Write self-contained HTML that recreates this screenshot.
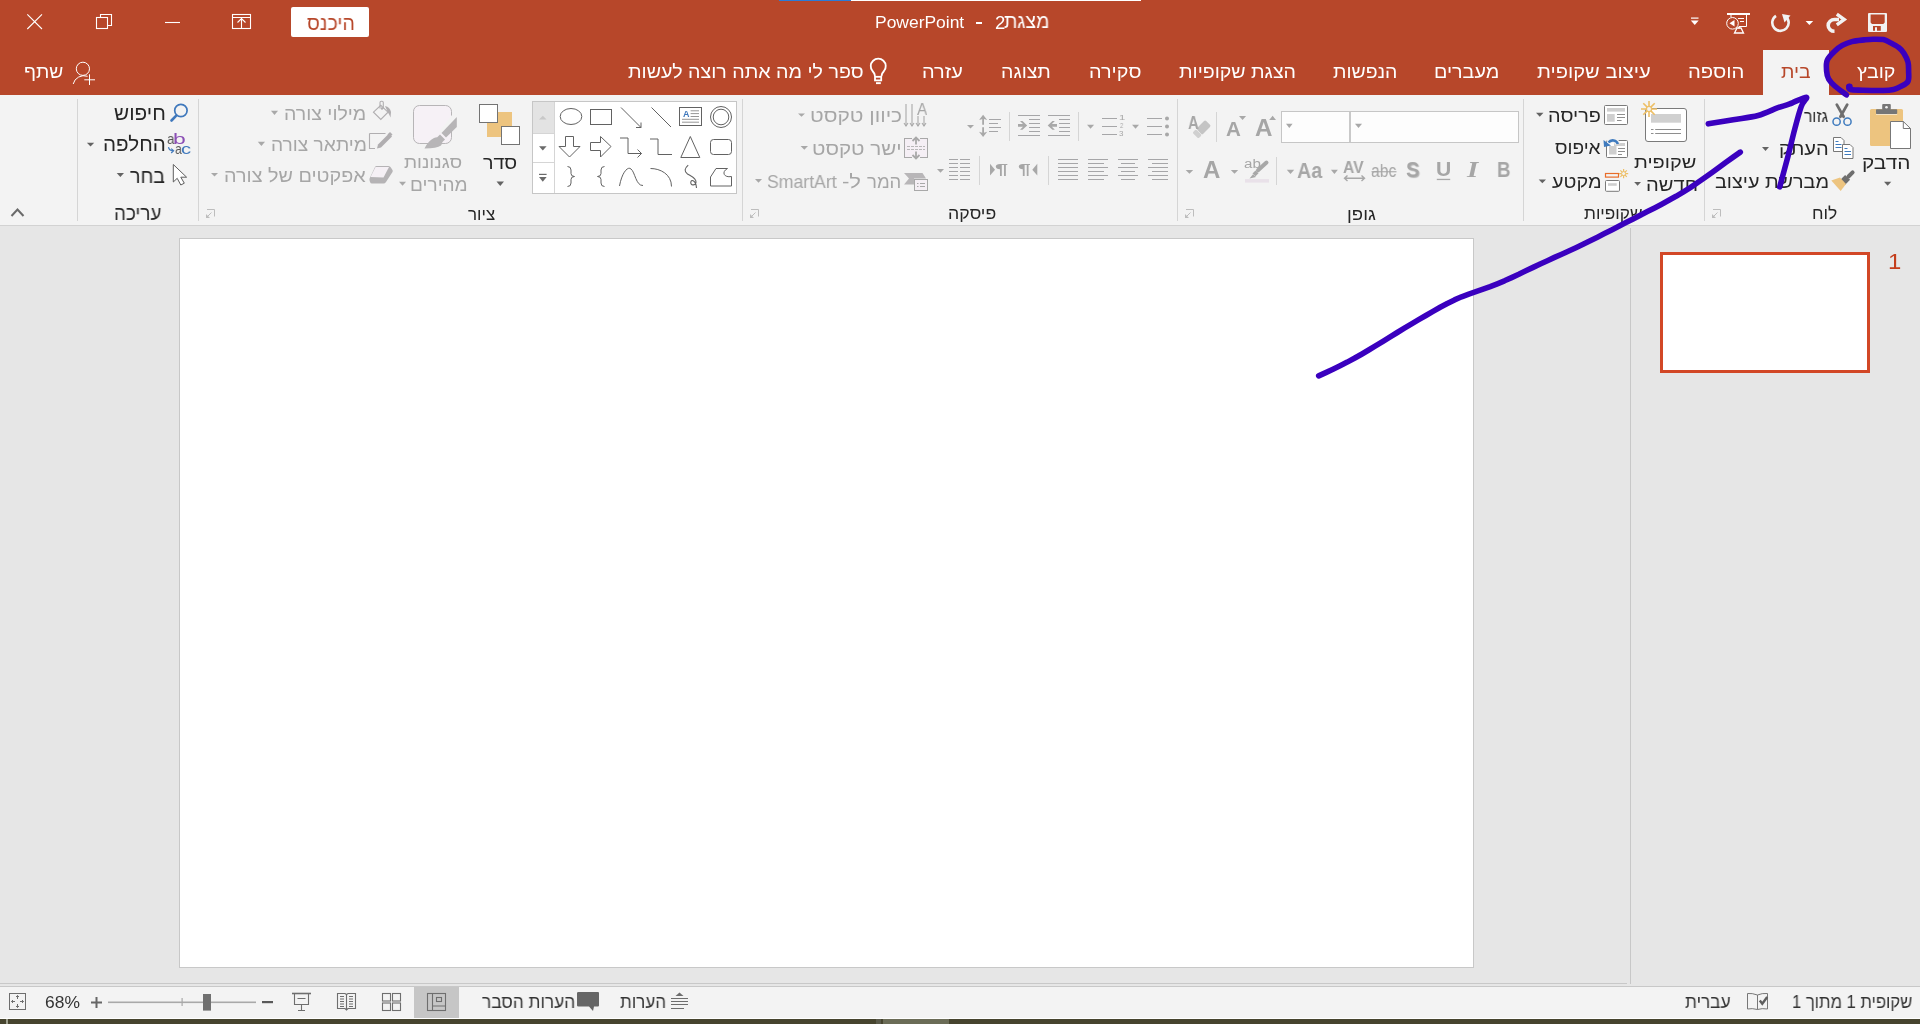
<!DOCTYPE html><html><head><meta charset="utf-8"><style>
*{margin:0;padding:0;box-sizing:border-box}
html,body{width:1920px;height:1024px;overflow:hidden}
body{position:relative;background:#E6E6E6;font-family:"Liberation Sans",sans-serif}
.a{position:absolute}
.t{position:absolute;will-change:transform;white-space:nowrap;line-height:1;transform-origin:0 0;direction:rtl;unicode-bidi:isolate;font-family:"Liberation Sans",sans-serif}
svg{position:absolute;overflow:visible}
</style></head><body>
<div class='a' style='left:0px;top:0px;width:1920px;height:95px;background:#B7472A'></div>
<div class='a' style='left:779px;top:0px;width:72px;height:1px;background:#2B7BD6'></div>
<div class='a' style='left:851px;top:0px;width:290px;height:1px;background:#fff'></div>
<div class='a' style='left:0px;top:95px;width:1920px;height:130px;background:#F3F3F3'></div>
<div class='a' style='left:0px;top:225px;width:1920px;height:1px;background:#D2D2D2'></div>
<div class='a' style='left:1763px;top:50px;width:66px;height:45px;background:#F3F3F3'></div>
<div class='a' style='left:179px;top:238px;width:1295px;height:730px;background:#fff;border:1px solid #C8C8C8'></div>
<div class='a' style='left:1630px;top:228px;width:1px;height:756px;background:#C8C8C8'></div>
<div class='a' style='left:0px;top:983px;width:1627px;height:1px;background:#C8C8C8'></div>
<div class='a' style='left:0px;top:986px;width:1920px;height:1px;background:#C8C8C8'></div>
<div class='a' style='left:0px;top:987px;width:1920px;height:31px;background:#F3F3F3'></div>
<div class='a' style='left:0px;top:1018px;width:1920px;height:1px;background:#FFFFFF'></div>
<div class='a' style='left:0px;top:1019px;width:1920px;height:5px;background:#46442E'></div>
<div class='a' style='left:6px;top:1019px;width:2px;height:5px;background:#9E9F8E'></div>
<div class='a' style='left:876px;top:1019px;width:5px;height:5px;background:#5A5A4A'></div>
<div class='a' style='left:883px;top:1019px;width:66px;height:5px;background:#6B6C57'></div>
<div class='a' style='left:1660px;top:252px;width:210px;height:121px;background:#fff;border:3px solid #D24726'></div>
<div class='a' style='left:291px;top:7px;width:78px;height:30px;background:#fff;border-radius:2px'></div>
<svg width="1920" height="1024" style="left:0;top:0" shape-rendering="geometricPrecision">
<!-- ===== title bar ===== -->
<g stroke="#fff" stroke-width="1.1" fill="none">
  <path d="M27.3 14.3 L42 29 M42 14.3 L27.3 29"/>
  <rect x="96.5" y="17.5" width="11" height="11"/>
  <path d="M100.5 17.5 V14.5 H111.5 V25.5 H107.5"/>
  <path d="M165 22.5 H180"/>
  <rect x="232.5" y="14.5" width="18" height="14"/>
  <path d="M232.5 17.5 H250.5 M241.5 17.8 V28.5 M237.5 22.5 L241.5 18.5 L245.5 22.5"/>
</g>
<!-- presenter -->
<g fill="none" stroke="#fff">
  <path d="M1727 14 H1750" stroke-width="2"/>
  <path d="M1746.5 15 V26.5 H1739" stroke-width="1"/>
  <path d="M1738 18.5 H1744 M1740 21.5 H1744" stroke-width="1"/>
  <circle cx="1732.5" cy="23.3" r="5.8" stroke-width="1"/>
  <path d="M1731 15 V17" stroke-width="1"/>
</g>
<path d="M1729.5 23.3 L1734.5 20 V26.6 Z" fill="#fff"/>
<path d="M1737 28 H1741 L1743.5 33 H1734.5 Z" fill="none" stroke="#fff" stroke-width="1.3"/><path d="M1739 26.5 V28.5" stroke="#fff" stroke-width="1.5"/>
<!-- customize QAT -->
<g fill="#fff"><rect x="1691" y="17.5" width="7.5" height="1.2"/><path d="M1690.8 20.5 H1698.7 L1694.75 25 Z"/></g>
<!-- repeat -->
<path d="M1776 15.8 A8.2 8.2 0 1 0 1785.5 16.2" fill="none" stroke="#F2F2F2" stroke-width="2.6"/>
<path d="M1782 14 L1790.5 15.6 L1784.5 22.5 Z" fill="#F2F2F2"/>
<path d="M1805.6 21 H1813.2 L1809.4 25 Z" fill="#fff"/>
<!-- redo -->
<path d="M1834.5 31.3 A6.3 5.9 0 0 1 1834.5 19.5 H1839" fill="none" stroke="#F2F2F2" stroke-width="3.6"/>
<path d="M1838.2 15.2 L1844.2 19.5 L1838.2 23.8" fill="none" stroke="#F2F2F2" stroke-width="3.4" stroke-linecap="square" stroke-linejoin="miter"/>
<!-- save -->
<path fill="#F2F2F2" fill-rule="evenodd" d="M1869 13 H1886 Q1887 13 1887 14 V31 Q1887 32 1886 32 H1869 Q1868 32 1868 31 V14 Q1868 13 1869 13 Z M1870.6 14.4 V22.4 L1872 23.9 H1883.3 L1884.7 22.4 V14.4 Z M1873 26 V30.8 H1875 V27.2 H1877 V30.8 H1880.8 V26 Z"/>
<!-- share person -->
<g fill="none" stroke="#fff" stroke-width="1">
  <circle cx="82.9" cy="68.8" r="6.6"/>
  <path d="M73.2 84 A11 10.5 0 0 1 87.6 76.3"/>
  <path d="M84.3 79.8 H95 M89.5 74.3 V85"/>
</g>
<!-- lightbulb -->
<g fill="none" stroke="#fff" stroke-width="1.8">
  <path d="M875 76 Q874.5 73 872.5 71 A7.5 7.5 0 1 1 884 71 Q882 73 881.5 76"/>
  <rect x="875" y="76.8" width="6.2" height="3.6"/>
</g>
<rect x="876" y="82.2" width="4.8" height="1.9" fill="#fff"/>

<!-- ===== ribbon separators ===== -->
<g fill="#D5D5D5">
  <rect x="77" y="99" width="1" height="122"/>
  <rect x="198" y="99" width="1" height="122"/>
  <rect x="742" y="99" width="1" height="122"/>
  <rect x="1177" y="99" width="1" height="122"/>
  <rect x="1523" y="99" width="1" height="122"/>
  <rect x="1704" y="99" width="1" height="122"/>
  <rect x="1216" y="112" width="1" height="30"/>
  <rect x="1276" y="157" width="1" height="28"/>
  <rect x="1009" y="112" width="1" height="29"/>
  <rect x="1078" y="112" width="1" height="29"/>
  <rect x="979" y="156" width="1" height="29"/>
  <rect x="1048" y="156" width="1" height="29"/>
</g>
<!-- collapse chevron -->
<path d="M11.5 216 L17.5 209.5 L23.5 216" fill="none" stroke="#6A6A6A" stroke-width="2"/>
<!-- dialog launchers -->
<g transform="translate(-979 0)"><path d="M1186 209.5 H1193.5 V216.5" fill="none" stroke="#BDBDBD" stroke-width="1"/><path d="M1185 214 V218 H1189 Z" fill="#BDBDBD"/><path d="M1187 216 L1190.5 212.5" stroke="#BDBDBD" stroke-width="1"/></g>
<g transform="translate(-435 0)"><path d="M1186 209.5 H1193.5 V216.5" fill="none" stroke="#BDBDBD" stroke-width="1"/><path d="M1185 214 V218 H1189 Z" fill="#BDBDBD"/><path d="M1187 216 L1190.5 212.5" stroke="#BDBDBD" stroke-width="1"/></g>
<g transform="translate(0 0)"><path d="M1186 209.5 H1193.5 V216.5" fill="none" stroke="#BDBDBD" stroke-width="1"/><path d="M1185 214 V218 H1189 Z" fill="#BDBDBD"/><path d="M1187 216 L1190.5 212.5" stroke="#BDBDBD" stroke-width="1"/></g>
<g transform="translate(527 0)"><path d="M1186 209.5 H1193.5 V216.5" fill="none" stroke="#BDBDBD" stroke-width="1"/><path d="M1185 214 V218 H1189 Z" fill="#BDBDBD"/><path d="M1187 216 L1190.5 212.5" stroke="#BDBDBD" stroke-width="1"/></g>
<!-- ===== clipboard group ===== -->
<rect x="1870" y="109" width="33" height="37" rx="1.5" fill="#EDC47F"/>
<rect x="1882.2" y="104" width="8.6" height="6" rx="1" fill="#767676"/>
<circle cx="1886.5" cy="107.3" r="1.3" fill="#F3F3F3"/>
<rect x="1876" y="109.2" width="21.2" height="4.8" rx="0.8" fill="#767676"/>
<rect x="1876" y="114" width="21.2" height="0.8" fill="#F6EBD8"/>
<path d="M1890.5 121.5 H1903.3 L1910.5 128.5 V148.5 H1890.5 Z" fill="#fff" stroke="#777" stroke-width="1"/>
<path d="M1903.3 121.5 V128.5 H1910.5" fill="none" stroke="#777" stroke-width="1"/>
<path d="M1884 181.7 H1891.3 L1887.65 185.8 Z" fill="#636363"/>
<!-- cut -->
<path d="M1836.8 104.6 L1843.6 116.8 M1847.2 104.6 L1840.4 116.8" stroke="#6E6E6E" stroke-width="2.8" stroke-linecap="round"/>
<circle cx="1836.6" cy="121.7" r="3.6" fill="none" stroke="#3F7BBE" stroke-width="1.5"/>
<circle cx="1847.5" cy="121.7" r="3.6" fill="none" stroke="#3F7BBE" stroke-width="1.5"/>
<!-- copy -->
<path d="M1833.5 137.5 H1841 L1844 140.5 V151.5 H1833.5 Z" fill="#fff" stroke="#777" stroke-width="1"/>
<path d="M1842.5 144.5 H1850 L1853 147.5 V158.5 H1842.5 Z" fill="#fff" stroke="#777" stroke-width="1"/>
<g stroke="#3F7BBE" stroke-width="1">
  <path d="M1835.5 141.5 H1838.5 M1835.5 144.5 H1841.5 M1835.5 147.5 H1841.5"/>
  <path d="M1844.5 148.5 H1847.5 M1844.5 151.5 H1851 M1844.5 154.5 H1851"/>
</g>
<!-- format painter -->
<path d="M1852.6 172.4 L1848.5 176.5" stroke="#6E6E6E" stroke-width="4" stroke-linecap="round"/>
<path d="M1847.6 177.4 L1842.4 182.6" stroke="#6E6E6E" stroke-width="7"/>
<path d="M1831.3 180.4 L1840 177.6 L1846 184 L1840.7 190.9 Z" fill="#EDC47F"/>

<!-- ===== slides group ===== -->
<rect x="1645.5" y="108.5" width="41" height="33" rx="2.5" fill="#fff" stroke="#7A7A7A" stroke-width="1"/>
<rect x="1651" y="114" width="30" height="8.7" fill="#D0D0D0"/>
<g stroke="#8E8E8E" stroke-width="1"><path d="M1651 129.5 H1653.5 M1655.2 129.5 H1681 M1651 133.5 H1653.5 M1655.2 133.5 H1681"/></g>
<g stroke="#EDBF66" stroke-width="1.6" stroke-linecap="butt">
  <path d="M1649 101 V106 M1649 112 V117 M1641 109 H1646 M1652 109 H1657 M1643.3 103.3 L1646.9 106.9 M1651.1 111.1 L1654.7 114.7 M1654.7 103.3 L1651.1 106.9 M1646.9 111.1 L1643.3 114.7"/>
</g>
<circle cx="1649" cy="109" r="2.6" fill="#F3F3F3" stroke="#EDBF66" stroke-width="1.3"/>
<path d="M1634.2 182 H1641 L1637.6 185.8 Z" fill="#636363"/>
<!-- layout -->
<rect x="1604.5" y="105.5" width="23" height="19" rx="1" fill="#fff" stroke="#7A7A7A" stroke-width="1"/>
<rect x="1607" y="108" width="18" height="3.6" fill="#CFCFCF"/>
<rect x="1607" y="114" width="7.7" height="7.7" fill="#CFCFCF"/>
<g stroke="#8E8E8E" stroke-width="1"><path d="M1617 114.5 H1625 M1617 117.5 H1625 M1617 120.5 H1621.6"/></g>
<path d="M1536 112.8 H1543.5 L1539.75 116.8 Z" fill="#636363"/>
<!-- reset -->
<rect x="1606.5" y="140.5" width="21" height="17" rx="1" fill="#fff" stroke="#7A7A7A" stroke-width="1"/>
<rect x="1609" y="146" width="7.5" height="8.5" fill="#CFCFCF"/>
<rect x="1614" y="143" width="11" height="3" fill="#CFCFCF"/>
<g stroke="#8E8E8E" stroke-width="1"><path d="M1618 148.5 H1625 M1618 151.5 H1625 M1618 154.5 H1622"/></g>
<path d="M1617.8 144 A5.2 4.8 0 0 0 1608.5 142.5" fill="none" stroke="#F3F3F3" stroke-width="5"/>
<path d="M1617.8 144 A5.2 4.8 0 0 0 1608.5 142.5" fill="none" stroke="#3F7BBE" stroke-width="2.6"/>
<path d="M1603.5 140 L1604 147 L1611 145.5 Z" fill="#3F7BBE"/>
<!-- section -->
<rect x="1605.5" y="173.5" width="13" height="3.6" fill="none" stroke="#E86D2A" stroke-width="1.2"/>
<rect x="1605.5" y="180.5" width="14" height="10.8" rx="1" fill="#fff" stroke="#7A7A7A" stroke-width="1"/>
<rect x="1608" y="183.2" width="8.7" height="2.6" fill="#CFCFCF"/>
<g stroke="#EDBF66" stroke-width="1.2">
  <path d="M1623.6 169 V178.2 M1619 173.6 H1628.2 M1620.4 170.4 L1626.8 176.8 M1626.8 170.4 L1620.4 176.8"/>
</g>
<circle cx="1623.6" cy="173.6" r="2" fill="#F3F3F3" stroke="#EDBF66" stroke-width="1"/>
<path d="M1538.7 179.4 H1546 L1542.35 183.2 Z" fill="#636363"/>

<!-- ===== font group ===== -->
<rect x="1281.5" y="111.5" width="237" height="31" fill="#FDFDFD" stroke="#C6C6C6" stroke-width="1"/>
<rect x="1349" y="112" width="2" height="30" fill="#C9C9C9"/>
<g fill="#A8A8A8">
  <path d="M1286 123.8 H1292.6 L1289.3 128 Z"/>
  <path d="M1355 123.8 H1362 L1358.5 128 Z"/>
  <path d="M1239 116 H1246.1 L1242.55 120 Z"/>
  <path d="M1269.2 120 H1276 L1272.6 115.8 Z"/>
  <path d="M1185.7 169.9 H1193.2 L1189.45 173.8 Z"/>
  <path d="M1230.8 169.9 H1238.2 L1234.5 173.8 Z"/>
  <path d="M1286.8 169.8 H1294.2 L1290.5 173.9 Z"/>
  <path d="M1330.9 169.8 H1337.9 L1334.4 173.9 Z"/>
</g>
<!-- clear formatting eraser -->
<g transform="translate(1201 130) rotate(-45)">
  <rect x="-2.5" y="-4.2" width="12.5" height="8.4" rx="1.5" fill="#C4C4C4"/>
  <rect x="-8" y="-4.2" width="5" height="8.4" rx="1.5" fill="#D0D0D0"/>
</g>
<!-- highlight pen -->
<rect x="1245" y="179.1" width="24" height="3.5" fill="#E9E1E9"/>
<path d="M1249.5 178.6 L1253 174.2 L1256 177 Z" fill="#A8A8A8"/>
<path d="M1252.5 173.5 L1255.5 170.5 L1258.5 173.3 L1255.5 176.3 Z" fill="#A8A8A8"/>
<path d="M1258 170.3 L1266.5 162.5" stroke="#A8A8A8" stroke-width="4" stroke-linecap="round"/>
<!-- AV arrow -->
<path d="M1344.5 178.3 H1364.5 M1347.5 175.5 L1344.5 178.3 L1347.5 181.1 M1361.5 175.5 L1364.5 178.3 L1361.5 181.1" fill="none" stroke="#A8A8A8" stroke-width="1.4"/>
<rect x="1371.5" y="171.2" width="25" height="1.1" fill="#A8A8A8"/>
<rect x="1436.8" y="178.8" width="13.4" height="1.3" fill="#A8A8A8"/>

<!-- ===== paragraph group ===== -->
<g fill="#A8A8A8">
  <path d="M967 125 H974 L970.5 128.6 Z"/>
  <path d="M1087 124.8 H1094.1 L1090.55 128.8 Z"/>
  <path d="M1132 124.8 H1139 L1135.5 128.8 Z"/>
  <path d="M937 169 H944 L940.5 172.8 Z"/>
  <path d="M798 113.5 H805 L801.5 116.8 Z"/>
  <path d="M800.6 146 H808 L804.3 149.7 Z"/>
  <path d="M755 178.9 H762 L758.5 182.8 Z"/>
  <path d="M257.8 141.7 H265 L261.4 146.1 Z"/>
  <path d="M271 110.7 H278 L274.5 115 Z"/>
  <path d="M211 173 H218 L214.5 176.6 Z"/>
  <path d="M399 181.8 H406 L402.5 185.8 Z"/>
</g>
<path stroke="#A6A6A8" stroke-width="1" fill="none" shape-rendering="crispEdges" d="M1147 118.5 H1162 M1102 118.5 H1117 M1147 126.5 H1162 M1102 126.5 H1117 M1147 134.5 H1162 M1102 134.5 H1117 M1018 115.5 H1040 M1018 135.5 H1040 M1029 119.5 H1040 M1029 123.5 H1040 M1029 127.5 H1040 M1029 131.5 H1040 M1048 115.5 H1070 M1048 135.5 H1070 M1059 119.5 H1070 M1059 123.5 H1070 M1059 127.5 H1070 M1059 131.5 H1070 M989 119.5 H1001 M989 123.5 H998 M989 127.5 H1001 M989 131.5 H998 M1148 159.5 H1168 M1118 159.5 H1138 M1088 159.5 H1108 M1058 159.5 H1078 M949 159.5 H958 M960 159.5 H970 M1152 163.5 H1168 M1121 163.5 H1135 M1088 163.5 H1104 M1058 163.5 H1078 M949 163.5 H958 M960 163.5 H970 M1148 167.5 H1168 M1118 167.5 H1138 M1088 167.5 H1108 M1058 167.5 H1078 M949 167.5 H958 M960 167.5 H970 M1152 171.5 H1168 M1121 171.5 H1135 M1088 171.5 H1104 M1058 171.5 H1078 M949 171.5 H958 M960 171.5 H970 M1148 175.5 H1168 M1118 175.5 H1138 M1088 175.5 H1108 M1058 175.5 H1078 M949 175.5 H958 M960 175.5 H970 M1152 179.5 H1168 M1121 179.5 H1135 M1088 179.5 H1104 M1058 179.5 H1078 M949 179.5 H958 M960 179.5 H970"/>
<g fill="#A8A8A8">
  <circle cx="1167" cy="118.5" r="2"/><circle cx="1167" cy="126.5" r="2"/><circle cx="1167" cy="134.5" r="2"/>
  <path d="M1027.2 125.4 L1022.5 121 H1020 L1023 124 H1018 V126.8 H1023 L1020 129.8 H1022.5 Z"/>
  <path d="M1047.7 125.4 L1052.4 121 H1054.9 L1051.9 124 H1057 V126.8 H1051.9 L1054.9 129.8 H1052.4 Z"/>
  <path d="M983.1 114.7 L979 120 L982.2 119 V124.8 H984 V119 L987.2 120 Z"/>
  <path d="M983.1 137.1 L979 131.8 L982.2 132.8 V127.2 H984 V132.8 L987.2 131.8 Z"/>
  <path d="M990 163.8 L995 169.7 L990 175.6 Z"/>
  <path d="M1037.3 163.8 L1032.3 169.7 L1037.3 175.6 Z"/>
</g>
<!-- text direction icon -->
<g stroke="#A8A8A8" stroke-width="1.1" fill="none">
  <path d="M906 104 V126 M912 104 V126 M918 116 V126 M924 116 V126"/>
  <path d="M904 123 L906 126 L908 123 M910 123 L912 126 L914 123 M916 123 L918 126 L920 123 M922 123 L924 126 L926 123"/>
</g>
<!-- align text icon -->
<rect x="904.5" y="138.5" width="23" height="19" fill="#F5EFF5" stroke="#A8A8A8" stroke-width="1"/>
<rect x="912" y="136" width="8" height="3" fill="#F3F3F3"/>
<rect x="912" y="157" width="8" height="3" fill="#F3F3F3"/>
<g stroke="#A8A8A8" fill="none">
  <path d="M916 137.5 V144.5 M916 151.5 V158.5" stroke-width="1.8"/>
  <path d="M912.5 141 L916 137.5 L919.5 141 M912.5 155 L916 158.5 L919.5 155" stroke-width="1.8"/>
  <path d="M907 146.5 H925 M907 149.5 H925" stroke-width="0.8" stroke-dasharray="3 1"/>
</g>
<!-- smartart -->
<path d="M904 173 H922.5 L926 178.5 H914 V184.5 H904 L909 178.5 Z" fill="#B8B6B8"/>
<g stroke="#A8A8A8" stroke-width="1" fill="none">
  <rect x="914.5" y="179.5" width="13" height="11" fill="#F5EFF5"/>
  <path d="M917 183.5 H918.5 M920 183.5 H925 M917 186.5 H918.5 M920 186.5 H925"/>
</g>

<!-- ===== drawing group ===== -->
<rect x="532.5" y="101.5" width="204" height="92" fill="#fff" stroke="#C6C6C6" stroke-width="1"/>
<rect x="533" y="102" width="21.5" height="31.5" fill="#E3E3E3"/>
<path d="M554.5 102 V193 M533 133.5 H554.5 M533 162.5 H554.5" stroke="#D5D5D5" stroke-width="1"/>
<path d="M539 119.6 H546.6 L542.8 115.8 Z" fill="#C8C8C8"/>
<path d="M539 146.3 H546.6 L542.8 150.6 Z" fill="#6A6A6A"/>
<rect x="539" y="173.8" width="7.6" height="1.2" fill="#6A6A6A"/>
<path d="M539 177 H546.6 L542.8 181.7 Z" fill="#6A6A6A"/>
<g fill="none" stroke="#626262" stroke-width="1">
  <ellipse cx="571" cy="116.5" rx="10.8" ry="8"/>
  <rect x="590.5" y="109.5" width="21" height="15"/>
  <path d="M621 107.5 L641 127.5 M641 122.5 V127.5 H636"/>
  <path d="M651.5 107.5 L671 127"/>
  <rect x="679.5" y="107.5" width="22" height="18"/>
  <path d="M690.6 110.8 H699 M690.6 113.6 H699 M690.6 116.5 H699 M682 119.3 H699 M682 122.2 H699" stroke="#8A8A8A" stroke-width="0.9"/>
  <circle cx="721" cy="117" r="10.5"/>
  <circle cx="721" cy="117" r="7.8"/>
  <!-- row 2 -->
  <path d="M565.5 136.5 H573.5 V146.5 H580 L569.5 157 L559 146.5 H565.5 Z"/>
  <path d="M590.5 142.5 H600.5 V136.5 L611 146.5 L600.5 157 V150.5 H590.5 Z"/>
  <path d="M620 138 H628 V153.5 H641.5 M637.5 149.5 L641.5 153.5 L637.5 157.5"/>
  <path d="M650 139 H658 V154.5 H672"/>
  <path d="M690.3 136.5 L699.8 157.5 H680.8 Z"/>
  <rect x="710.5" y="139.5" width="21" height="15" rx="3"/>
  <!-- row 3 -->
  <path d="M567.5 166.5 Q571 166.5 571 170 V173.5 Q571 176.5 574.5 176.5 Q571 176.5 571 179.5 V183 Q571 186.5 567.5 186.5"/>
  <path d="M604.5 166.5 Q601 166.5 601 170 V173.5 Q601 176.5 597.5 176.5 Q601 176.5 601 179.5 V183 Q601 186.5 604.5 186.5"/>
  <path d="M619.5 186 C622 172 628 166 631 169 C635 172 636 186 643 185.5"/>
  <path d="M650.5 168.5 C660 168.5 671.5 174 671.5 186.5"/>
  <path d="M688.2 165.2 C684.5 168.5 684 171.5 687.5 174 C691.5 176.5 696.8 178.5 696 182.5 C695.2 186 690.2 185.5 690.8 182 C691.3 179 696 180.5 696.5 188" stroke-width="1.1"/>
  <path d="M710.5 177 L716 168.5 H727.5 C721 172 724 178 731.5 176.5 V186 H710.5 Z"/>
</g>

<!-- arrange -->
<rect x="487" y="112" width="25" height="25" fill="#EDC47F"/>
<rect x="479.5" y="104.5" width="18" height="18" fill="#fff" stroke="#737373" stroke-width="1"/>
<rect x="501.5" y="126.5" width="18" height="18" fill="#fff" stroke="#737373" stroke-width="1"/>
<path d="M496.5 181.6 H504 L500.25 186 Z" fill="#636363"/>
<!-- quick styles -->
<rect x="413.5" y="105.5" width="38" height="38" rx="6" fill="#F6F1F6" stroke="#B7B5B7" stroke-width="1"/>
<path d="M456.5 116.5 L442.8 134.5" stroke="#F3F3F3" stroke-width="9"/>
<path d="M456.8 117 L456.8 127 L446 137.5 L441.5 133 Z" fill="#B7B5B7"/>
<path d="M440 134.5 L445 139.5 L442 142.5 L437 137.5 Z" fill="#B7B5B7"/>
<path d="M424.5 148.5 Q428 141 434 138 Q438 136 441 139 Q443.5 142 441 145.5 Q437 148.5 424.5 148.5 Z" fill="#B7B5B7"/>
<!-- shape fill -->
<g fill="none" stroke="#B0AEB0" stroke-width="1.1">
  <path d="M373.5 112.2 L380.8 105.3 L388 112.2 L380.8 119.4 Z"/>
  <path d="M380 108.5 V102.5 Q380 101.2 381.3 101.2 H382 Q383.3 101.2 383.3 102.5 V108.5"/>
  <path d="M369.5 133.5 H385.5 M369.5 133.5 V148.5 H375"/>
</g>
<circle cx="382" cy="108.5" r="1.2" fill="#B0AEB0"/>
<path d="M385 106 Q390 107 391 112 L390.5 117.5 Q389 114 388 112.5 Z" fill="#B0AEB0"/>
<path d="M377 148.5 L378 144.5 L389 133.5 L392 136.5 L381 147.5 Z" fill="#B0AEB0"/>
<path d="M388 134.5 L390.5 132 L393 134.5 L390.5 137 Z" fill="#B0AEB0" transform="translate(-0.5 0)"/>
<!-- shape effects -->
<path d="M370 177.5 L375 167 Q375.5 166 376.5 166 H388 Q389.5 166 390.5 167 L392.5 170 Q393 171 392.5 172 L386 182 Q385 183.5 383.5 183.5 H372 Q370.5 183.5 370 182 L369.5 180 Q369.3 178.5 370 177.5 Z" fill="#B5B3B5"/>
<path d="M370.5 177 L375.5 167 H389 L383.5 177.5 Z" fill="#F5F0F5"/>

<!-- ===== editing group ===== -->
<circle cx="180.9" cy="110.5" r="6.2" fill="none" stroke="#3F78BC" stroke-width="1.7"/>
<path d="M176 115.8 L171.5 120.5" stroke="#3F78BC" stroke-width="2.6" stroke-linecap="round"/>
<path d="M86.9 142.8 H94.2 L90.55 146.6 Z" fill="#636363"/>
<path d="M116.7 173 H124 L120.35 176.9 Z" fill="#636363"/>
<path d="M1762 147 H1769 L1765.5 151 Z" fill="#636363"/>
<path d="M173.3 164.5 V182 L177.2 178.3 L180.8 185 L184.3 183.2 L180.8 177.2 H186.6 Z" fill="#fff" stroke="#5E5E5E" stroke-width="1" stroke-linejoin="round"/>
<path d="M168.5 147.2 Q169 150.8 173 150.8 M171.2 148.6 L173.6 150.8 L171.2 153" fill="none" stroke="#3F78BC" stroke-width="1.2"/>

<!-- ===== status bar ===== -->
<g fill="none" stroke="#6E6E6E" stroke-width="1">
  <rect x="9.5" y="993.5" width="16" height="16"/>
  <path d="M17.5 995.5 V999 M17.5 1004 V1007.5 M11.5 1001.5 H15 M20 1001.5 H23.5" />
  <path d="M16 997 L17.5 995.5 L19 997 M16 1006 L17.5 1007.5 L19 1006 M13 1000 L11.5 1001.5 L13 1003 M22 1000 L23.5 1001.5 L22 1003"/>
</g>
<path d="M91 1002.5 H102 M96.5 997 V1008" stroke="#666" stroke-width="2"/>
<rect x="108" y="1001.5" width="148" height="1.6" fill="#A9A9A9"/>
<rect x="181.5" y="998" width="1.2" height="8" fill="#A9A9A9"/>
<rect x="203" y="994" width="8" height="16.6" fill="#707070"/>
<rect x="262" y="1001" width="11" height="2.2" fill="#595959"/>
<g fill="none" stroke="#6E6E6E" stroke-width="1.1">
  <path d="M292 993.5 H311" stroke-width="1.6"/>
  <path d="M294.5 994 V1004.5 H308.5 V994 M297.5 998.5 H305.5 M301.5 1004.5 V1010 M298 1010.5 H305"/>
  <path d="M337.5 993.5 H345 L346.5 994.5 L348 993.5 H355.5 V1008.5 H348 L346.5 1010 L345 1008.5 H337.5 Z M346.5 994.5 V1009"/>
  <path d="M340 996.5 H344 M340 999 H344 M340 1001.5 H344 M340 1004 H344 M340 1006.5 H344 M349 996.5 H353 M349 999 H353 M349 1001.5 H353 M349 1004 H353 M349 1006.5 H353"/>
  <rect x="382.5" y="993.5" width="8" height="7.5"/><rect x="392.5" y="993.5" width="8" height="7.5"/>
  <rect x="382.5" y="1003" width="8" height="7.5"/><rect x="392.5" y="1003" width="8" height="7.5"/>
</g>
<rect x="414" y="987" width="45" height="31" fill="#C6C6C6"/>
<g fill="none" stroke="#6E6E6E" stroke-width="1.1">
  <rect x="427.5" y="993.5" width="18" height="17"/>
  <path d="M432.5 993.5 V1010.5 M432.5 1006 H445.5"/>
  <rect x="436.5" y="997.5" width="5" height="4"/>
</g>
<path d="M578.5 992 H598 Q599 992 599 993 V1005.5 Q599 1006.5 598 1006.5 H594 L593 1011 L589 1006.5 H578.5 Q577 1006.5 577 1005.5 V993 Q577 992 578.5 992 Z" fill="#666"/>
<g stroke="#6E6E6E" stroke-width="1.1">
  <path d="M671 998.5 H688 M671 1001.5 H688 M671 1004.5 H688 M671 1008.5 H684"/>
</g>
<path d="M675.5 996 L679.5 992.5 L683.5 996 Z" fill="#6E6E6E"/>
<g fill="none" stroke="#777" stroke-width="1">
  <path d="M1747.5 993.5 Q1752 993 1757.5 995 V1009.5 Q1752 1008 1747.5 1009 Z"/>
  <path d="M1757.5 995 Q1762 993 1767.5 993.5 V1009 Q1762 1008 1757.5 1009.5"/>
</g>
<path d="M1759.8 1000.5 L1762.3 1003.8 L1767.2 997" fill="none" stroke="#5E5E5E" stroke-width="2.4"/>
</svg>

<div class='t' style='left:874.94px;top:14.25px;font-size:16.5px;font-family:"Liberation Sans";font-weight:400;font-style:normal;color:#fff;transform:scaleX(1.0572);'>PowerPoint</div>
<div class='t' style='left:1004.03px;top:11.25px;font-size:20.0px;font-family:"Liberation Sans";font-weight:400;font-style:normal;color:#fff;transform:scaleX(0.9659);'>מצגת</div>
<div class='t' style='left:1857.00px;top:63.00px;font-size:18.5px;font-family:"Liberation Sans";font-weight:400;font-style:normal;color:#fff;transform:scaleX(1.0657);'>קובץ</div>
<div class='t' style='left:1780.95px;top:63.00px;font-size:18.5px;font-family:"Liberation Sans";font-weight:400;font-style:normal;color:#B7472A;transform:scaleX(1.0481);'>בית</div>
<div class='t' style='left:1687.90px;top:63.00px;font-size:18.5px;font-family:"Liberation Sans";font-weight:400;font-style:normal;color:#fff;transform:scaleX(1.0959);'>הוספה</div>
<div class='t' style='left:1536.91px;top:63.00px;font-size:18.5px;font-family:"Liberation Sans";font-weight:400;font-style:normal;color:#fff;transform:scaleX(1.0882);'>עיצוב שקופית</div>
<div class='t' style='left:1434.37px;top:63.00px;font-size:18.5px;font-family:"Liberation Sans";font-weight:400;font-style:normal;color:#fff;transform:scaleX(1.0655);'>מעברים</div>
<div class='t' style='left:1332.95px;top:63.00px;font-size:18.5px;font-family:"Liberation Sans";font-weight:400;font-style:normal;color:#fff;transform:scaleX(1.0508);'>הנפשות</div>
<div class='t' style='left:1178.54px;top:63.00px;font-size:18.5px;font-family:"Liberation Sans";font-weight:400;font-style:normal;color:#fff;transform:scaleX(1.0593);'>הצגת שקופיות</div>
<div class='t' style='left:1088.53px;top:63.00px;font-size:18.5px;font-family:"Liberation Sans";font-weight:400;font-style:normal;color:#fff;transform:scaleX(1.0723);'>סקירה</div>
<div class='t' style='left:1001.44px;top:63.00px;font-size:18.5px;font-family:"Liberation Sans";font-weight:400;font-style:normal;color:#fff;transform:scaleX(1.0556);'>תצוגה</div>
<div class='t' style='left:922.32px;top:63.00px;font-size:18.5px;font-family:"Liberation Sans";font-weight:400;font-style:normal;color:#fff;transform:scaleX(1.0778);'>עזרה</div>
<div class='t' style='left:628.44px;top:63.00px;font-size:18.5px;font-family:"Liberation Sans";font-weight:400;font-style:normal;color:#fff;transform:scaleX(1.0614);'>ספר לי מה אתה רוצה לעשות</div>
<div class='t' style='left:23.76px;top:63.00px;font-size:18.5px;font-family:"Liberation Sans";font-weight:400;font-style:normal;color:#fff;transform:scaleX(1.0389);'>שתף</div>
<div class='t' style='left:306.52px;top:12.50px;font-size:20.0px;font-family:"Liberation Sans";font-weight:400;font-style:normal;color:#B7472A;transform:scaleX(0.9783);'>היכנס</div>
<div class='t' style='left:1862.38px;top:154.00px;font-size:18.5px;font-family:"Liberation Sans";font-weight:400;font-style:normal;color:#262626;transform:scaleX(1.1244);'>הדבק</div>
<div class='t' style='left:1804.00px;top:108.00px;font-size:17.0px;font-family:"Liberation Sans";font-weight:400;font-style:normal;color:#262626;transform:scaleX(0.9231);'>גזור</div>
<div class='t' style='left:1779.32px;top:140.40px;font-size:18.5px;font-family:"Liberation Sans";font-weight:400;font-style:normal;color:#262626;transform:scaleX(1.0837);'>העתק</div>
<div class='t' style='left:1714.73px;top:173.00px;font-size:18.5px;font-family:"Liberation Sans";font-weight:400;font-style:normal;color:#262626;transform:scaleX(1.0692);'>מברשת עיצוב</div>
<div class='t' style='left:1811.67px;top:205.00px;font-size:17.0px;font-family:"Liberation Sans";font-weight:400;font-style:normal;color:#262626;transform:scaleX(1.0304);'>לוח</div>
<div class='t' style='left:1633.52px;top:154.00px;font-size:17.0px;font-family:"Liberation Sans";font-weight:400;font-style:normal;color:#262626;transform:scaleX(1.1765);'>שקופית</div>
<div class='t' style='left:1645.91px;top:176.00px;font-size:18.5px;font-family:"Liberation Sans";font-weight:400;font-style:normal;color:#262626;transform:scaleX(1.0889);'>חדשה</div>
<div class='t' style='left:1548.23px;top:106.50px;font-size:18.5px;font-family:"Liberation Sans";font-weight:400;font-style:normal;color:#262626;transform:scaleX(1.0745);'>פריסה</div>
<div class='t' style='left:1554.50px;top:139.00px;font-size:18.5px;font-family:"Liberation Sans";font-weight:400;font-style:normal;color:#262626;transform:scaleX(1.0295);'>איפוס</div>
<div class='t' style='left:1552.30px;top:172.50px;font-size:18.5px;font-family:"Liberation Sans";font-weight:400;font-style:normal;color:#262626;transform:scaleX(1.0689);'>מקטע</div>
<div class='t' style='left:1584.29px;top:204.50px;font-size:17.0px;font-family:"Liberation Sans";font-weight:400;font-style:normal;color:#262626;transform:scaleX(1.0125);'>שקופיות</div>
<div class='t' style='left:1347.11px;top:205.50px;font-size:17.0px;font-family:"Liberation Sans";font-weight:400;font-style:normal;color:#262626;transform:scaleX(1.0920);'>גופן</div>
<div class='t' style='left:947.56px;top:205.00px;font-size:17.0px;font-family:"Liberation Sans";font-weight:400;font-style:normal;color:#262626;transform:scaleX(1.0400);'>פיסקה</div>
<div class='t' style='left:809.53px;top:107.00px;font-size:18.5px;font-family:"Liberation Sans";font-weight:400;font-style:normal;color:#A6A6A6;transform:scaleX(1.1333);'>כיוון טקסט</div>
<div class='t' style='left:812.27px;top:140.00px;font-size:18.5px;font-family:"Liberation Sans";font-weight:400;font-style:normal;color:#A6A6A6;transform:scaleX(1.1130);'>ישר טקסט</div>
<div class='t' style='left:767.35px;top:173.00px;font-size:18.5px;font-family:"Liberation Sans";font-weight:400;font-style:normal;color:#A6A6A6;transform:scaleX(0.9542);'>SmartArt</div>
<div class='t' style='left:842.05px;top:173.00px;font-size:18.5px;font-family:"Liberation Sans";font-weight:400;font-style:normal;color:#A6A6A6;transform:scaleX(1.1964);'>ל-</div>
<div class='t' style='left:867.20px;top:173.00px;font-size:18.5px;font-family:"Liberation Sans";font-weight:400;font-style:normal;color:#A6A6A6;transform:scaleX(0.9939);'>המר</div>
<div class='t' style='left:483.20px;top:154.00px;font-size:18.5px;font-family:"Liberation Sans";font-weight:400;font-style:normal;color:#262626;transform:scaleX(1.0613);'>סדר</div>
<div class='t' style='left:468.00px;top:205.50px;font-size:17.0px;font-family:"Liberation Sans";font-weight:400;font-style:normal;color:#262626;transform:scaleX(1.0000);'>ציור</div>
<div class='t' style='left:403.89px;top:154.00px;font-size:17.0px;font-family:"Liberation Sans";font-weight:400;font-style:normal;color:#A6A6A6;transform:scaleX(1.1140);'>סגנונות</div>
<div class='t' style='left:410.44px;top:176.00px;font-size:18.5px;font-family:"Liberation Sans";font-weight:400;font-style:normal;color:#A6A6A6;transform:scaleX(1.0283);'>מהירים</div>
<div class='t' style='left:283.80px;top:105.00px;font-size:18.5px;font-family:"Liberation Sans";font-weight:400;font-style:normal;color:#A6A6A6;transform:scaleX(1.0546);'>מילוי צורה</div>
<div class='t' style='left:270.66px;top:136.00px;font-size:18.5px;font-family:"Liberation Sans";font-weight:400;font-style:normal;color:#A6A6A6;transform:scaleX(1.0367);'>מיתאר צורה</div>
<div class='t' style='left:223.73px;top:167.00px;font-size:18.5px;font-family:"Liberation Sans";font-weight:400;font-style:normal;color:#A6A6A6;transform:scaleX(1.0702);'>אפקטים של צורה</div>
<div class='t' style='left:113.96px;top:102.50px;font-size:20.0px;font-family:"Liberation Sans";font-weight:400;font-style:normal;color:#262626;transform:scaleX(1.0372);'>חיפוש</div>
<div class='t' style='left:102.94px;top:134.00px;font-size:20.0px;font-family:"Liberation Sans";font-weight:400;font-style:normal;color:#262626;transform:scaleX(1.0307);'>החלפה</div>
<div class='t' style='left:129.50px;top:165.50px;font-size:20.0px;font-family:"Liberation Sans";font-weight:400;font-style:normal;color:#262626;transform:scaleX(0.9786);'>בחר</div>
<div class='t' style='left:113.87px;top:203.00px;font-size:20.0px;font-family:"Liberation Sans";font-weight:400;font-style:normal;color:#262626;transform:scaleX(0.9415);'>עריכה</div>
<div class='t' style='left:45.19px;top:994.00px;font-size:16.5px;font-family:"Liberation Sans";font-weight:400;font-style:normal;color:#333;transform:scaleX(1.0565);'>68%</div>
<div class='t' style='left:481.90px;top:993.00px;font-size:18.5px;font-family:"Liberation Sans";font-weight:400;font-style:normal;color:#333;transform:scaleX(0.9347);'>הערות הסבר</div>
<div class='t' style='left:620.08px;top:993.00px;font-size:18.5px;font-family:"Liberation Sans";font-weight:400;font-style:normal;color:#333;transform:scaleX(0.9219);'>הערות</div>
<div class='t' style='left:1792.10px;top:993.00px;font-size:18.5px;font-family:"Liberation Sans";font-weight:400;font-style:normal;color:#333;transform:scaleX(0.8977);'>שקופית 1 מתוך 1</div>
<div class='t' style='left:1684.97px;top:993.00px;font-size:18.5px;font-family:"Liberation Sans";font-weight:400;font-style:normal;color:#333;transform:scaleX(0.9298);'>עברית</div>
<div class='t' style='left:1888.48px;top:252.30px;font-size:21.5px;font-family:"Liberation Sans";font-weight:400;font-style:normal;color:#C43E1C;transform:scaleX(1.1111);'>1</div>
<div class='t' style='left:994.81px;top:14.10px;font-size:18.5px;font-family:"Liberation Sans";font-weight:400;font-style:normal;color:#fff;transform:scaleX(0.9938);'>2</div>
<div class='t' style='left:1497.13px;top:160.20px;font-size:21.5px;font-family:"Liberation Sans";font-weight:700;font-style:normal;color:#A6A6A6;transform:scaleX(0.8714);'>B</div>
<div class='t' style='left:1467.40px;top:159.20px;font-size:22.5px;font-family:"Liberation Serif";font-weight:700;font-style:italic;color:#A6A6A6;transform:scaleX(1.2889);'>I</div>
<div class='t' style='left:1435.77px;top:159.20px;font-size:20.5px;font-family:"Liberation Sans";font-weight:700;font-style:normal;color:#A6A6A6;transform:scaleX(1.0308);'>U</div>
<div class='t' style='left:1406.46px;top:160.20px;font-size:21.5px;font-family:"Liberation Sans";font-weight:700;font-style:normal;color:#A6A6A6;transform:scaleX(0.9385);text-shadow:1px 1px 1px rgba(0,0,0,.25)'>S</div>
<div class='t' style='left:1371.00px;top:163.00px;font-size:17.5px;font-family:"Liberation Sans";font-weight:400;font-style:normal;color:#A6A6A6;transform:scaleX(0.8963);'>abc</div>
<div class='t' style='left:1343.15px;top:159.00px;font-size:16.5px;font-family:"Liberation Sans";font-weight:700;font-style:normal;color:#A6A6A6;transform:scaleX(0.9476);'>AV</div>
<div class='t' style='left:1297.31px;top:159.90px;font-size:22.0px;font-family:"Liberation Sans";font-weight:700;font-style:normal;color:#A6A6A6;transform:scaleX(0.8926);'>Aa</div>
<div class='t' style='left:1202.72px;top:157.80px;font-size:24.0px;font-family:"Liberation Sans";font-weight:700;font-style:normal;color:#A6A6A6;transform:scaleX(0.9813);'>A</div>
<div class='t' style='left:1225.70px;top:119.00px;font-size:20.5px;font-family:"Liberation Sans";font-weight:700;font-style:normal;color:#A6A6A6;transform:scaleX(1.0038);'>A</div>
<div class='t' style='left:1254.99px;top:115.90px;font-size:24.0px;font-family:"Liberation Sans";font-weight:700;font-style:normal;color:#A6A6A6;transform:scaleX(1.0062);'>A</div>
<div class='t' style='left:1188.39px;top:114.00px;font-size:18.5px;font-family:"Liberation Sans";font-weight:700;font-style:normal;color:#A6A6A6;transform:scaleX(0.8083);'>A</div>
<div class='t' style='left:1244.44px;top:157.90px;font-size:12.0px;font-family:"Liberation Sans";font-weight:400;font-style:normal;color:#A6A6A6;transform:scaleX(1.2583);'>ab</div>
<div class='t' style='left:1118.50px;top:114.00px;font-size:7.5px;font-family:"Liberation Sans";font-weight:400;font-style:normal;color:#A6A6A6;transform:scaleX(1.5000);'>1</div>
<div class='t' style='left:1119.80px;top:122.00px;font-size:7.5px;font-family:"Liberation Sans";font-weight:400;font-style:normal;color:#A6A6A6;transform:scaleX(0.8000);'>2</div>
<div class='t' style='left:1118.73px;top:130.00px;font-size:7.5px;font-family:"Liberation Sans";font-weight:400;font-style:normal;color:#A6A6A6;transform:scaleX(1.0667);'>3</div>
<div class='t' style='left:683.00px;top:109.50px;font-size:9.0px;font-family:"Liberation Sans";font-weight:700;font-style:normal;color:#3F78BC;transform:scaleX(0.9667);'>A</div>
<div class='t' style='left:917.30px;top:102.20px;font-size:16.0px;font-family:"Liberation Sans";font-weight:400;font-style:normal;color:#A6A6A6;transform:scaleX(0.9545);'>A</div>
<div class='t' style='left:995.43px;top:160.80px;font-size:15.0px;font-family:"Liberation Sans";font-weight:700;font-style:normal;color:#A6A6A6;transform:scaleX(1.5714);'>¶</div>
<div class='t' style='left:1018.27px;top:160.80px;font-size:15.0px;font-family:"Liberation Sans";font-weight:700;font-style:normal;color:#A6A6A6;transform:scaleX(1.5286);'>¶</div>
<div class='t' style='left:167.10px;top:130.80px;font-size:15.0px;font-family:"Liberation Sans";font-weight:400;font-style:normal;color:#555;transform:scaleX(0.9000);'>a</div>
<div class='t' style='left:173.17px;top:132.30px;font-size:14.0px;font-family:"Liberation Sans";font-weight:400;font-style:normal;color:#8B4FB5;transform:scaleX(1.6333);'>b</div>
<div class='t' style='left:175.09px;top:140.90px;font-size:15.0px;font-family:"Liberation Sans";font-weight:400;font-style:normal;color:#555;transform:scaleX(0.8143);'>a</div>
<div class='t' style='left:180.65px;top:140.90px;font-size:15.0px;font-family:"Liberation Sans";font-weight:400;font-style:normal;color:#3F78BC;transform:scaleX(1.3500);'>c</div>
<div class='a' style='left:976px;top:22px;width:6px;height:1.5px;background:#fff'></div>
<svg width="1920" height="1024" style="left:0;top:0">
<g fill="none" stroke="#3A00BF" stroke-width="5.6" stroke-linecap="round" stroke-linejoin="round">
<path d="M1318.7 375.9 L1325.8 372.6 L1333.0 369.2 L1340.1 365.7 L1347.3 362.1 L1354.4 358.3 L1361.6 354.2 L1368.7 350.0 L1375.9 345.7 L1383.0 341.3 L1390.2 336.9 L1397.3 332.5 L1404.4 328.2 L1411.6 323.9 L1418.7 319.7 L1425.9 315.5 L1433.0 311.4 L1440.2 307.3 L1447.3 303.5 L1454.5 299.9 L1461.6 296.8 L1468.8 294.1 L1475.9 291.7 L1483.1 289.2 L1490.2 286.6 L1497.3 283.8 L1504.5 280.8 L1511.6 277.6 L1518.8 274.3 L1525.9 270.8 L1533.1 267.4 L1540.2 264.0 L1547.4 260.7 L1554.5 257.4 L1561.7 254.2 L1568.8 251.0 L1575.9 247.7 L1583.1 244.2 L1590.2 240.7 L1597.4 237.2 L1604.5 233.6 L1611.7 229.9 L1618.8 226.2 L1626.0 222.6 L1633.1 218.9 L1640.3 215.2 L1647.4 211.6 L1654.6 207.9 L1661.7 204.2 L1668.8 200.3 L1676.0 196.3 L1683.1 192.1 L1690.3 187.6 L1697.4 182.8 L1704.6 177.8 L1711.7 172.7 L1718.9 167.4 L1726.0 162.2 L1733.2 157.1 L1740.3 152.1"/>
<path d="M1708.3 123.8 C1712.5 123.1 1724.9 121.1 1733.2 119.7 C1741.5 118.3 1750.6 117.5 1758.1 115.5 C1765.6 113.5 1772.7 109.6 1778.0 107.7 C1783.3 105.8 1785.0 105.7 1789.7 103.9 C1794.4 102.2 1804.4 96.8 1806.3 97.2 C1808.2 97.6 1803.2 101.0 1801.3 106.4 C1799.3 111.8 1796.8 121.3 1794.6 129.6 C1792.4 137.9 1790.5 146.6 1788.0 156.2 C1785.5 165.8 1781.1 181.8 1779.7 186.9"/>
<path d="M1849.2 86.7 C1849.4 87.2 1848.2 88.9 1850.5 89.5 C1852.8 90.1 1857.3 90.0 1862.8 90.2 C1868.3 90.4 1878.3 90.6 1883.4 90.5 C1888.5 90.4 1890.8 90.1 1893.6 89.5 C1896.4 88.9 1898.0 88.1 1900.4 86.7 C1902.8 85.3 1906.6 83.9 1908.0 81.3 C1909.4 78.7 1908.6 74.2 1908.6 71.0 C1908.6 67.8 1908.8 65.1 1908.0 62.1 C1907.2 59.1 1905.4 55.6 1903.9 53.2 C1902.4 50.8 1901.3 49.6 1899.0 47.8 C1896.7 46.0 1892.8 44.0 1890.2 42.6 C1887.6 41.2 1886.2 40.2 1883.4 39.6 C1880.6 39.0 1876.3 39.2 1873.1 39.2 C1869.9 39.2 1867.7 39.5 1864.2 39.9 C1860.7 40.3 1855.6 40.7 1851.9 41.6 C1848.2 42.5 1845.0 43.9 1842.3 45.4 C1839.6 46.9 1838.0 48.0 1835.5 50.5 C1833.0 53.0 1828.8 56.7 1827.3 60.1 C1825.8 63.5 1826.4 67.8 1826.6 71.0 C1826.8 74.2 1827.3 76.7 1828.7 79.2 C1830.1 81.7 1831.8 83.4 1834.8 86.0 C1837.8 88.6 1844.5 93.4 1846.4 94.9"/>
</g>
<circle cx="1849.4" cy="87" r="3.4" fill="#3A00BF"/>
</svg>

</body></html>
